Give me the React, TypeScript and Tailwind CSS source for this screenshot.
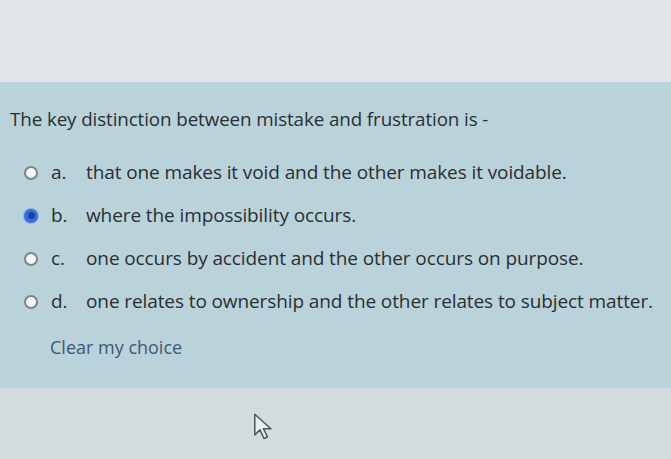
import { useState } from "react";

const OPTIONS = [
     { key: "a", text: "that one makes it void and the other makes it voidable." },
     { key: "b", text: "where the impossibility occurs." },
     { key: "c", text: "one occurs by accident and the other occurs on purpose." },
     { key: "d", text: "one relates to ownership and the other relates to subject matter." },
];

function Radio({ checked }: { checked: boolean }) {
     if (checked) {
          return (
               <span className="w-[14px] h-[14px] rounded-full bg-[#3a6fd8] flex items-center justify-center shrink-0 ring-1 ring-[#8fb0e8]">
                    <span className="w-[7px] h-[7px] rounded-full bg-[#1d3fb0]" />
               </span>
          );
     }
     return <span className="w-[14px] h-[14px] rounded-full bg-[#f4f6f7] border-2 border-[#7d8387] shrink-0" />;
}

export default function App() {
     const [choice, setChoice] = useState<string | null>("b");

     return (
          <div className="w-[671px] h-[459px] flex flex-col bg-[#d4dbde] text-[#2a2f32] font-['Open_Sans',sans-serif] overflow-hidden">
               <div className="h-[82px] bg-[#e1e5e8] shrink-0" />

               <div className="h-[306px] bg-[#bad2da] shrink-0 flex flex-col pl-[10px] pt-[24px]">
                    <p className="text-[18.8px] leading-[26px] tracking-[-0.1px]">
                         The key distinction between mistake and frustration is -
                    </p>

                    <div className="mt-[28px] flex flex-col gap-[18px] pl-[14px]">
                         {OPTIONS.map((opt) => (
                              <label
                                   key={opt.key}
                                   onClick={() => setChoice(opt.key)}
                                   className="flex items-center h-[25px] text-[19px] tracking-[-0.1px] cursor-pointer"
                              >
                                   <Radio checked={choice === opt.key} />
                                   <span className="w-[48px] pl-[13px]">{opt.key}.</span>
                                   <span>{opt.text}</span>
                              </label>
                         ))}
                    </div>

                    <button
                         onClick={() => setChoice(null)}
                         className="mt-[20px] ml-[40px] self-start text-[18px] text-[#3f5877]"
                    >
                         Clear my choice
                    </button>
               </div>

               <div className="flex-1 relative">
                    <svg className="absolute left-[252px] top-[24px]" width="24" height="30" viewBox="0 0 20 26">
                         <path
                              d="M2 2 L2 20 L6.5 15.5 L10 23 L13 21.5 L9.5 14.5 L16 14.5 Z"
                              fill="#e9eef0"
                              stroke="#4d565b"
                              strokeWidth="1.3"
                              strokeLinejoin="round"
                         />
                    </svg>
               </div>
          </div>
     );
}
